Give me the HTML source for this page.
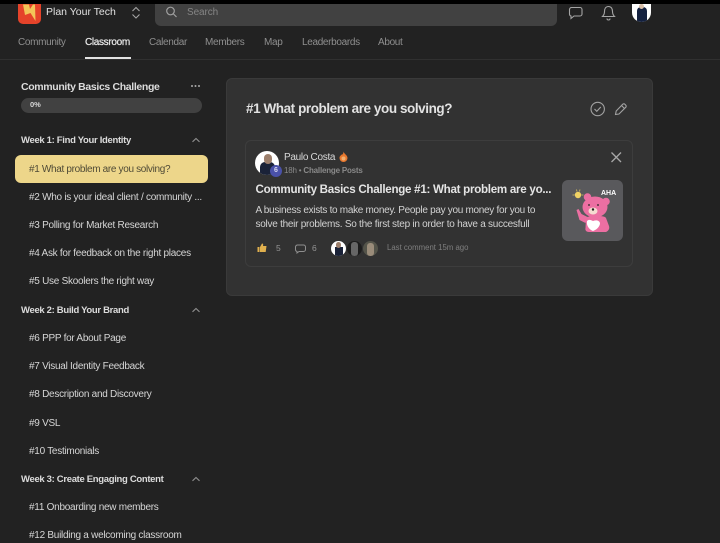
<!DOCTYPE html>
<html><head><meta charset="utf-8"><style>
*{box-sizing:border-box;margin:0;padding:0}
html,body{width:720px;height:541px;overflow:hidden;background:#222;font-family:"Liberation Sans",sans-serif}
.t{position:absolute;white-space:nowrap;line-height:14px}
.b{position:absolute}
.nav{font-size:10px;letter-spacing:-.33px;color:#8f8f8f;top:36px}
.l{font-size:10px;letter-spacing:-.27px;color:#d6d6d6;left:29px}
.w{font-size:9.500px;letter-spacing:-.32px;font-weight:bold;color:#dcdcdc;left:21px}
svg{position:absolute;overflow:visible}
</style></head><body>
<div class="b" style="left:0;top:0;width:720px;height:4px;background:#000"></div>
<div class="b" style="left:0;top:59px;width:720px;height:1px;background:#303030"></div>
<div class="b" style="left:18px;top:4px;width:23px;height:20px;background:#e5432a;border-radius:0 0 5px 5px"></div>
<svg style="left:0;top:0" width="60" height="30"><path d="M23 4.500h6l1 4.500 3-4.500h2l.5 16.500-5-8-5.500 2z" fill="#f3c558"/></svg>
<div class="t" style="left:46px;top:5px;font-size:10.500px;color:#e2e2e2">Plan Your Tech</div>
<svg style="left:130px;top:6px" width="12" height="14" fill="none" stroke="#a5a5a5" stroke-width="1.100"><path d="M2.500 5L6 1.500 9.500 5M2.500 8.500L6 12 9.500 8.500"/></svg>
<div class="b" style="left:155px;top:4px;width:402px;height:22px;background:#414141;border-radius:0 0 6px 6px"></div>
<svg style="left:165px;top:6px" width="14" height="14" fill="none" stroke="#a0a0a0" stroke-width="1.200"><circle cx="5.500" cy="5" r="3.800"/><path d="M8.500 8l3 3"/></svg>
<div class="t" style="left:187px;top:6px;font-size:10px;letter-spacing:-.1px;color:#858585">Search</div>
<svg style="left:568px;top:6px" width="16" height="14" fill="none" stroke="#a5a5a5" stroke-width="1.100"><path d="M3.500 1.500h8.500a2 2 0 0 1 2 2v4.500a2 2 0 0 1-2 2H6L3 12.500V10a2 2 0 0 1-1.500-2V3.500a2 2 0 0 1 2-2z"/></svg>
<svg style="left:601px;top:5px" width="15" height="16" fill="none" stroke="#a5a5a5" stroke-width="1.100"><path d="M7.500 1.500c-3 0-4 2.500-4 5 0 2.500-1 4-2 5h12c-1-1-2-2.500-2-5 0-2.500-1-5-4-5zM6 13.500a1.500 1.500 0 0 0 3 0"/></svg>
<div class="b" style="left:632px;top:4px;width:19px;height:18px;background:#fff;border-radius:0 0 10px 10px;overflow:hidden"><div class="b" style="left:5px;top:3px;width:10px;height:15px;background:#14213f;border-radius:4px 4px 0 0"></div><div class="b" style="left:7px;top:0;width:5px;height:5px;background:#d9bfa8;border-radius:50%"></div></div>

<div class="t nav" style="left:18px">Community</div>
<div class="t nav" style="left:85px;color:#e8e8e8;-webkit-text-stroke:.25px #e8e8e8">Classroom</div>
<div class="b" style="left:85px;top:57px;width:46px;height:2px;background:#e2e2e2"></div>
<div class="t nav" style="left:149px">Calendar</div>
<div class="t nav" style="left:205px">Members</div>
<div class="t nav" style="left:264px">Map</div>
<div class="t nav" style="left:302px">Leaderboards</div>
<div class="t nav" style="left:378px">About</div>

<div class="t" style="left:21px;top:80px;font-size:10.500px;letter-spacing:-.35px;font-weight:bold;color:#dcdcdc">Community Basics Challenge</div>
<div class="b" style="left:191px;top:85px;width:2px;height:2px;background:#aaa;border-radius:50%;box-shadow:3.500px 0 #aaa,7px 0 #aaa"></div>
<div class="b" style="left:21px;top:98px;width:181px;height:15px;background:#414141;border-radius:8px"></div>
<div class="t" style="left:30px;top:98px;font-size:7.500px;font-weight:bold;color:#d8d8d8">0%</div>

<div class="t w" style="top:134px">Week 1: Find Your Identity</div>
<svg style="left:191px;top:137px" width="10" height="6" fill="none" stroke="#8f8f8f" stroke-width="1.100"><path d="M1.500 4.800L5 1.500 8.500 4.800"/></svg>
<div class="b" style="left:15px;top:155px;width:193px;height:28px;background:#edd68a;border-radius:6px"></div>
<div class="t l" style="top:163px;color:#4f4a36;letter-spacing:-.33px">#1 What problem are you solving?</div>
<div class="t l" style="top:191px">#2 Who is your ideal client / community ...</div>
<div class="t l" style="top:219px">#3 Polling for Market Research</div>
<div class="t l" style="top:247px">#4 Ask for feedback on the right places</div>
<div class="t l" style="top:275px">#5 Use Skoolers the right way</div>
<div class="t w" style="top:304px">Week 2: Build Your Brand</div>
<svg style="left:191px;top:307px" width="10" height="6" fill="none" stroke="#8f8f8f" stroke-width="1.100"><path d="M1.500 4.800L5 1.500 8.500 4.800"/></svg>
<div class="t l" style="top:332px">#6 PPP for About Page</div>
<div class="t l" style="top:360px">#7 Visual Identity Feedback</div>
<div class="t l" style="top:388px">#8 Description and Discovery</div>
<div class="t l" style="top:417px">#9 VSL</div>
<div class="t l" style="top:445px">#10 Testimonials</div>
<div class="t w" style="top:473px">Week 3: Create Engaging Content</div>
<svg style="left:191px;top:476px" width="10" height="6" fill="none" stroke="#8f8f8f" stroke-width="1.100"><path d="M1.500 4.800L5 1.500 8.500 4.800"/></svg>
<div class="t l" style="top:501px">#11 Onboarding new members</div>
<div class="t l" style="top:529px">#12 Building a welcoming classroom</div>

<div class="b" style="left:226px;top:78px;width:427px;height:218px;background:#323232;border:1px solid #3a3a3a;border-radius:6px"></div>
<div class="t" style="left:246px;top:102px;font-size:13.500px;letter-spacing:-.43px;font-weight:bold;color:#e2e2e2">#1 What problem are you solving?</div>
<svg style="left:590px;top:101px" width="16" height="16" fill="none" stroke="#a2a2a2" stroke-width="1.100"><circle cx="7.700" cy="8" r="6.700"/><path d="M4.500 8l2.300 2.300 4-4.300"/></svg>
<svg style="left:614px;top:102px" width="14" height="14" fill="none" stroke="#a2a2a2" stroke-width="1.100"><path d="M1.500 12.500l.7-3.500 6.500-6.700a1.500 1.500 0 0 1 2.200 0l.8.800a1.500 1.500 0 0 1 0 2.200L5 12z"/><path d="M7.500 3.500l3 3"/></svg>

<div class="b" style="left:245px;top:140px;width:388px;height:127px;border:1px solid #3d3d3d;border-radius:6px"></div>
<div class="b" style="left:255px;top:151px;width:24px;height:24px;background:#fff;border-radius:50%;overflow:hidden"><div class="b" style="left:5px;top:11px;width:15px;height:14px;background:#1a2238;border-radius:5px 5px 0 0"></div><div class="b" style="left:8.500px;top:3px;width:8px;height:10px;background:#9c7f6c;border-radius:4px"></div></div>
<div class="b" style="left:270px;top:165px;width:12px;height:12px;background:#4a51a8;border-radius:50%"></div>
<div class="t" style="left:270px;top:164px;width:12px;text-align:center;font-size:7px;color:#d5d6ee;font-weight:bold">6</div>
<div class="t" style="left:284px;top:151px;font-size:10px;letter-spacing:-.3px;color:#d8d8d8">Paulo Costa</div>
<svg style="left:339px;top:151px" width="9" height="11"><path d="M4.500 0.500C5 3 8.500 4 8.500 7A4 4 0 0 1 .5 7C.5 5 2 4.500 2.500 3.500 3.500 4 4.500 2.500 4.500.5z" fill="#e8782e"/><circle cx="4.500" cy="7.500" r="2" fill="#f3b070"/></svg>
<div class="t" style="left:284px;top:164px;font-size:8px;letter-spacing:-.2px;color:#8a8a8a">18h • <b>Challenge Posts</b></div>
<svg style="left:610px;top:151px" width="12" height="12" fill="none" stroke="#a8a8a8" stroke-width="1.300"><path d="M1.500 1.500l9.500 9.500M11 1.500L1.500 11"/></svg>
<div class="t" style="left:255.500px;top:183px;font-size:11.600px;letter-spacing:-.28px;font-weight:bold;color:#e4e4e4">Community Basics Challenge #1: What problem are yo...</div>
<div class="t" style="left:255.500px;top:204px;font-size:10px;letter-spacing:-.3px;color:#d2d2d2">A business exists to make money. People pay you money for you to</div>
<div class="t" style="left:255.500px;top:218px;font-size:10px;letter-spacing:-.26px;color:#d2d2d2">solve their problems. So the first step in order to have a succesfull</div>

<svg style="left:257px;top:243px" width="10" height="10"><path d="M0.500 4h2v5h-2zM3 4l2-3.500c1 0 1.500.7 1 2.500H9.500l-.8 6H3z" fill="#e0b04e"/></svg>
<div class="t" style="left:276px;top:241px;font-size:8.500px;color:#959595">5</div>
<svg style="left:295px;top:244px" width="11" height="10" fill="none" stroke="#8f8f8f" stroke-width="1"><path d="M2.500 1h6a2 2 0 0 1 2 2v2.500a2 2 0 0 1-2 2H4L2 9V7.500A2 2 0 0 1 .5 5.500V3a2 2 0 0 1 2-2z"/></svg>
<div class="t" style="left:312px;top:241px;font-size:8.500px;color:#959595">6</div>
<div class="b" style="left:331px;top:241px;width:15px;height:15px;background:#fff;border-radius:50%;overflow:hidden"><div class="b" style="left:4px;top:6px;width:8px;height:9px;background:#1a2238"></div><div class="b" style="left:5px;top:1px;width:5px;height:6px;background:#9c7f6c;border-radius:3px"></div></div>
<div class="b" style="left:347px;top:241px;width:15px;height:15px;background:#1c1c1c;border-radius:50%;overflow:hidden"><div class="b" style="left:4px;top:1px;width:7px;height:14px;background:#666;border-radius:3px"></div></div>
<div class="b" style="left:363px;top:241px;width:15px;height:15px;background:#54544a;border-radius:50%;overflow:hidden"><div class="b" style="left:4px;top:2px;width:7px;height:13px;background:#9a8c7a;border-radius:3px"></div></div>
<div class="t" style="left:387px;top:241px;font-size:7.800px;color:#7f7f7f">Last comment 15m ago</div>

<div class="b" style="left:562px;top:180px;width:61px;height:61px;background:#59595c;border-radius:6px"></div>
<svg style="left:562px;top:180px" width="61" height="61">
<circle cx="16" cy="15" r="3.200" fill="#f0d264"/><path d="M10.500 15h2M14.500 9.500l.5 2M19.500 15h2M18 9.500l-.5 2" stroke="#d8c060" stroke-width=".8"/>
<path d="M14.500 30l2-1 3 5 6 3-2 6-6-3z" fill="#ec6fa2"/>
<path d="M24 38c2-3 19-3 20 0l3 8c1 3-1 5-3 6H27c-3 0-4-2-3.500-4z" fill="#ec6fa2"/>
<circle cx="25.500" cy="17" r="3.800" fill="#ec6fa2"/><circle cx="44" cy="21.500" r="3.800" fill="#ec6fa2"/>
<ellipse cx="33" cy="27" rx="12.500" ry="10.500" fill="#ec6fa2"/>
<ellipse cx="31" cy="31" rx="4.500" ry="3.500" fill="#f5dcd0"/>
<circle cx="31" cy="29.500" r="1.200" fill="#222"/><circle cx="27" cy="25" r=".9" fill="#222"/><circle cx="36" cy="25" r=".9" fill="#222"/>
<path d="M25 41c2-2 4-1 6 0 3-1 6-1 7 2 0 4-4 7-7 8-3-1-7-5-6-10z" fill="#fff"/>
<text x="39" y="15" font-family="Liberation Sans,sans-serif" font-size="7" font-weight="bold" fill="#fff">AHA</text>
</svg>
</body></html>
